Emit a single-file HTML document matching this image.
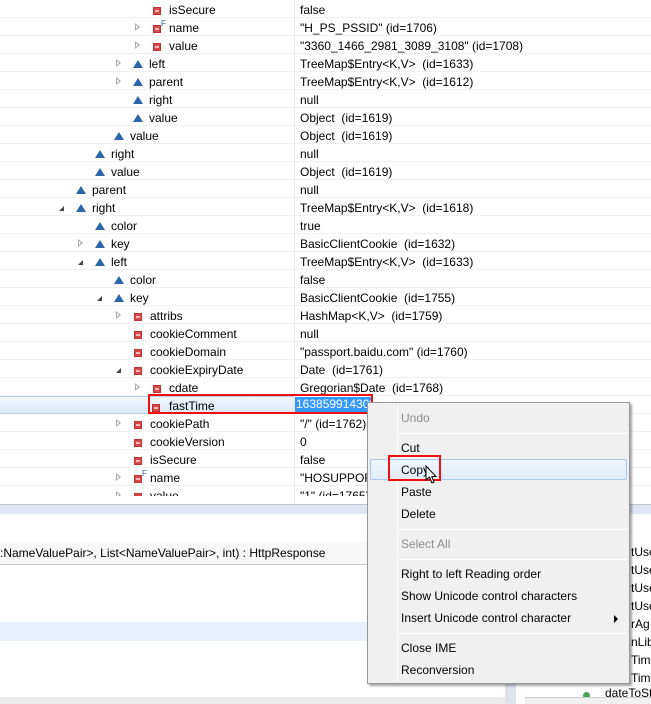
<!DOCTYPE html>
<html><head><meta charset="utf-8"><style>
*{margin:0;padding:0;box-sizing:border-box}
body{width:651px;height:704px;overflow:hidden;background:#fff;font-family:"Liberation Sans",sans-serif;font-size:12px;color:#000;position:relative}
.row{position:absolute;left:0;width:651px;height:18px;border-bottom:1px solid #f0f0f0}
.row span{position:absolute;top:3px;white-space:pre}
.col{position:absolute;left:294px;top:0;width:1px;height:505px;background:#e8e8e8}
.ic{position:absolute;top:5px}
.red{width:8px;height:8px;background:#d9474b;border:1px solid #b33;top:7px}
.red:after{content:"";position:absolute;left:1px;top:2px;width:4px;height:2px;background:#f6b9b9}
.blue{width:0;height:0;border-left:5px solid transparent;border-right:5px solid transparent;border-bottom:8px solid #2c66a8;top:6px}
.arr{position:absolute;top:5px;width:0;height:0;border-top:4px solid transparent;border-bottom:4px solid transparent;border-left:5px solid #aaa}
.arr:after{content:"";position:absolute;left:-4px;top:-2px;border-top:2px solid transparent;border-bottom:2px solid transparent;border-left:2px solid #fff}
.exp{position:absolute;top:8px;width:0;height:0;border-left:5px solid transparent;border-bottom:5px solid #444}
.F{position:absolute;top:1px;font-size:8px;color:#2c66a8}
.menu{position:absolute;left:367px;top:402px;width:263px;height:282px;background:#f0f0f0;border:1px solid #979797;box-shadow:2px 2px 2px rgba(0,0,0,.35)}
.menu .g{position:absolute;left:29px;top:2px;width:1px;height:276px;background:#e2e2e2;border-right:1px solid #fff}
.mi{position:absolute;left:33px;white-space:nowrap}
.sep{position:absolute;left:31px;width:229px;height:1px;background:#dcdcdc;border-bottom:1px solid #fff}
</style></head><body>
<div class="col"></div>
<div id="tree"></div>
<div style="position:absolute;left:0;top:396px;width:294px;height:18px;background:linear-gradient(#f2f7fd,#dbe8f8);border-top:1px solid #b9d0ec;border-bottom:1px solid #b9d0ec"></div>
<div style="position:absolute;left:152px;top:404px" class="ic red"></div>
<div style="position:absolute;left:169px;top:399px">fastTime</div>
<div style="position:absolute;left:295px;top:397px;width:77px;height:15px;background:#3399ff;color:#fff;padding-left:1px;overflow:hidden;white-space:nowrap;line-height:15px">1638599143000</div>
<div style="position:absolute;left:148px;top:394px;width:225px;height:20px;border:2px solid #f01010"></div>

<div style="position:absolute;left:0;top:504px;width:651px;height:1px;background:#c9c9c9"></div>
<div style="position:absolute;left:0;top:505px;width:505px;height:9px;background:#dde6f2"></div>
<div style="position:absolute;left:0;top:542px;width:505px;height:23px;background:#f7f7f7;border-bottom:1px solid #c8c8c8"></div>
<div style="position:absolute;left:0;top:546px;white-space:nowrap">:NameValuePair&gt;, List&lt;NameValuePair&gt;, int) : HttpResponse</div>
<div style="position:absolute;left:0;top:622px;width:505px;height:19px;background:#e8f0fb"></div>
<div style="position:absolute;left:0;top:697px;width:505px;height:7px;background:#ececec"></div>
<div style="position:absolute;left:505px;top:505px;width:3px;height:199px;background:#e0e0e0"></div>
<div style="position:absolute;left:508px;top:505px;width:8px;height:199px;background:#dde3ef"></div>
<div style="position:absolute;left:516px;top:505px;width:135px;height:9px;background:#dde6f2"></div>
<div style="position:absolute;left:631px;top:543px;line-height:18px;white-space:nowrap">tUse<br>tUse<br>tUse<br>tUse<br>rAg<br>nLib<br>Time<br>Time</div>
<div style="position:absolute;left:583px;top:692px;width:7px;height:7px;border-radius:50%;background:#4aa55a"></div>
<div style="position:absolute;left:605px;top:686px;white-space:nowrap">dateToSt</div>
<div style="position:absolute;left:525px;top:697px;width:126px;height:7px;background:#f0f0f0;border-top:1px solid #ccc"></div>

<div class="menu">
<div class="g"></div>
<div class="mi" style="top:8px;color:#8d8d8d">Undo</div>
<div class="sep" style="top:30px"></div>
<div class="mi" style="top:38px">Cut</div>
<div style="position:absolute;left:2px;top:56px;width:257px;height:21px;border:1px solid #a8c8ee;border-radius:2px;background:linear-gradient(#f0f6fd,#e0ecfa)"></div>
<div class="mi" style="top:60px">Copy</div>
<div class="mi" style="top:82px">Paste</div>
<div class="mi" style="top:104px">Delete</div>
<div class="sep" style="top:126px"></div>
<div class="mi" style="top:134px;color:#8d8d8d">Select All</div>
<div class="sep" style="top:156px"></div>
<div class="mi" style="top:164px">Right to left Reading order</div>
<div class="mi" style="top:186px">Show Unicode control characters</div>
<div class="mi" style="top:208px">Insert Unicode control character</div>
<div style="position:absolute;left:246px;top:212px;border-top:4px solid transparent;border-bottom:4px solid transparent;border-left:4px solid #000"></div>
<div class="sep" style="top:230px"></div>
<div class="mi" style="top:238px">Close IME</div>
<div class="mi" style="top:260px">Reconversion</div>
</div>
<div style="position:absolute;left:388px;top:455px;width:53px;height:26px;border:2px solid #f01010"></div>
<svg style="position:absolute;left:425px;top:465px" width="14" height="20" viewBox="0 0 14 20"><path d="M1 1 L1 15 L4.5 12 L7 18 L9 17 L6.8 11.5 L11 11.5 Z" fill="#fff" stroke="#000" stroke-width="1"/></svg>

<script>
var R=[
[4,'r',0,'isSecure','false'],
[4,'r',1,'name','"H_PS_PSSID" (id=1706)',1],
[4,'r',1,'value','"3360_1466_2981_3089_3108" (id=1708)'],
[3,'b',1,'left','TreeMap$Entry<K,V>  (id=1633)'],
[3,'b',1,'parent','TreeMap$Entry<K,V>  (id=1612)'],
[3,'b',0,'right','null'],
[3,'b',0,'value','Object  (id=1619)'],
[2,'b',0,'value','Object  (id=1619)'],
[1,'b',0,'right','null'],
[1,'b',0,'value','Object  (id=1619)'],
[0,'b',0,'parent','null'],
[0,'b',2,'right','TreeMap$Entry<K,V>  (id=1618)'],
[1,'b',0,'color','true'],
[1,'b',1,'key','BasicClientCookie  (id=1632)'],
[1,'b',2,'left','TreeMap$Entry<K,V>  (id=1633)'],
[2,'b',0,'color','false'],
[2,'b',2,'key','BasicClientCookie  (id=1755)'],
[3,'r',1,'attribs','HashMap<K,V>  (id=1759)'],
[3,'r',0,'cookieComment','null'],
[3,'r',0,'cookieDomain','"passport.baidu.com" (id=1760)'],
[3,'r',2,'cookieExpiryDate','Date  (id=1761)'],
[4,'r',1,'cdate','Gregorian$Date  (id=1768)'],
null,
[3,'r',1,'cookiePath','"/" (id=1762)'],
[3,'r',0,'cookieVersion','0'],
[3,'r',0,'isSecure','false'],
[3,'r',1,'name','"HOSUPPORT" (id=1764)',1],
[3,'r',1,'value','"1" (id=1765)']
];
function esc(t){return t.replace(/</g,'&lt;').replace(/>/g,'&gt;');}
var h='';
R.forEach(function(r,i){
 var top=i*18;
 if(!r){h+='<div class="row" style="top:'+top+'px"></div>';return;}
 var ix=76+19*r[0];
 var s='<div class="row" style="top:'+top+'px;'+(i==27?'height:10px;overflow:hidden;border:0':'')+'">';
 if(r[2]==1)s+='<div class="arr" style="left:'+(ix-17)+'px"></div>';
 if(r[2]==2)s+='<div class="exp" style="left:'+(ix-17)+'px"></div>';
 if(r[1]=='r')s+='<div class="ic red" style="left:'+(ix+1)+'px"></div>';
 else s+='<div class="ic blue" style="left:'+ix+'px"></div>';
 if(r[5])s+='<div class="F" style="left:'+(ix+9)+'px">F</div>';
 s+='<span style="left:'+(ix+(r[1]=='r'?17:16))+'px">'+r[3]+'</span>';
 s+='<span style="left:300px">'+esc(r[4])+'</span></div>';
 h+=s;
});
document.getElementById('tree').innerHTML=h;
</script>
</body></html>
